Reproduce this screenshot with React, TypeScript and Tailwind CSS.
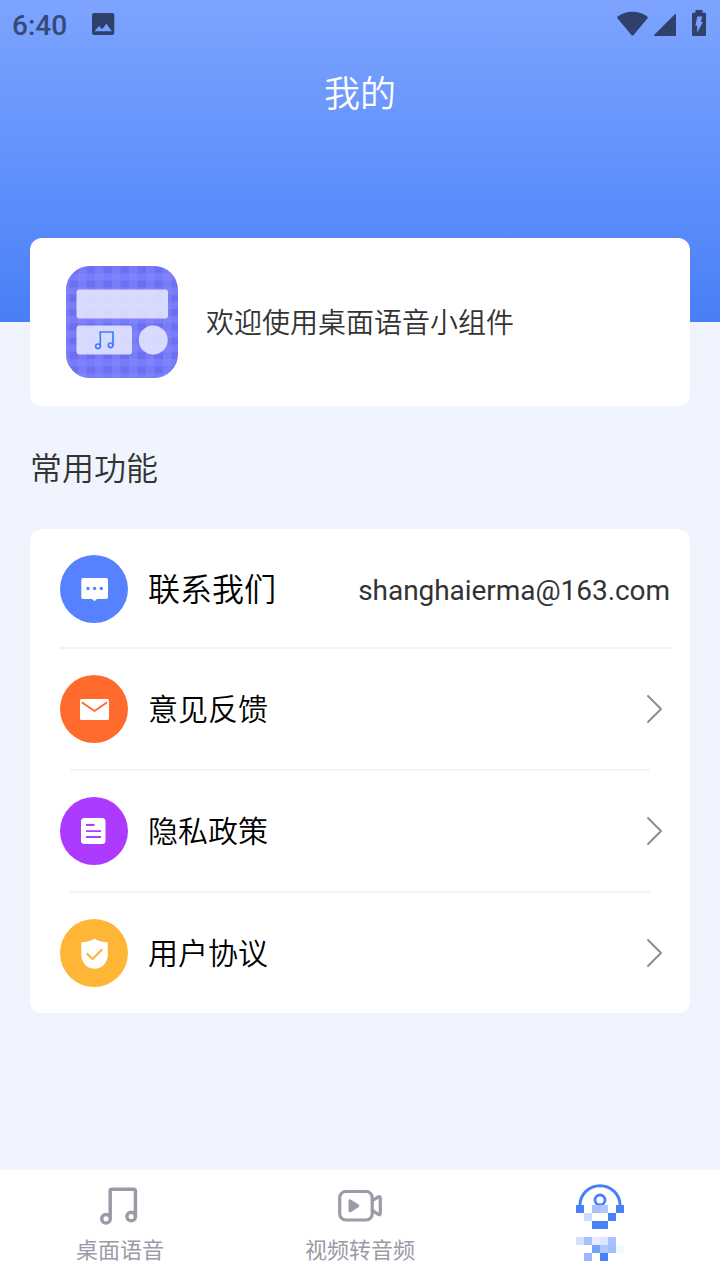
import type { ReactNode } from "react";

type Row = {
  id: number;
  label: string;
  color: string;
  icon: ReactNode;
};

const rows: Row[] = [
  {
    id: 1,
    label: "意见反馈",
    color: "bg-[#ff6b2c]",
    icon: (
      <svg viewBox="0 0 68 68" className="w-full h-full">
        <rect x="20" y="24" width="29" height="21" rx="1.5" fill="#fff" />
        <path d="M22.5 27.7 L34.5 36 L46.5 27.7" fill="none" stroke="#ff6b2c" strokeWidth="1.8" strokeLinecap="round" strokeLinejoin="round" />
      </svg>
    ),
  },
  {
    id: 2,
    label: "隐私政策",
    color: "bg-[#ad3bff]",
    icon: (
      <svg viewBox="0 0 68 68" className="w-full h-full">
        <rect x="21" y="21" width="24.5" height="26" rx="3.5" fill="#fff" />
        <path d="M26 28h8.5M26 34.2h15M26 40h15" stroke="#ad3bff" strokeWidth="1.8" />
      </svg>
    ),
  },
  {
    id: 3,
    label: "用户协议",
    color: "bg-[#ffb636]",
    icon: (
      <svg viewBox="0 0 68 68" className="w-full h-full">
        <path d="M34.5 19.7 Q40 23 47.8 23.2 V35.5 C47.8 43.5 42 49.8 34.5 49.8 C27 49.8 21.3 43.5 21.3 35.5 V23.2 Q29 23 34.5 19.7Z" fill="#fff" />
        <path d="M27.4 35 L32.6 40 L41.7 30.8" fill="none" stroke="#ffb636" strokeWidth="2.2" strokeLinecap="round" strokeLinejoin="round" />
      </svg>
    ),
  },
];

// [x, y, color] of each 8px block
const blocks: [number, number, string][] = [
  [0, 21, "#4880f8"],
  [16, 21, "#a6c1fc"],
  [24, 21, "#b0c8ff"],
  [40, 21, "#4880f8"],
  [8, 29, "#cbdbff"],
  [32, 29, "#4880f8"],
  [16, 37, "#4880f8"],
  [24, 37, "#4880f8"],
  [0, 53, "#d3e0ff"],
  [8, 53, "#a6c1fb"],
  [16, 53, "#e6edff"],
  [24, 53, "#dbe6ff"],
  [32, 53, "#a8c3fc"],
  [16, 61, "#769ffb"],
  [24, 61, "#b0c8ff"],
  [32, 61, "#a0bdfc"],
  [40, 61, "#f5f8ff"],
  [8, 69, "#9bb8fd"],
  [24, 69, "#4880f8"],
];

const stripes = [0, 1, 2, 3, 4, 5, 6, 7];

function StatusBar() {
  return (
    <div className="flex items-center justify-between h-[50px] pl-3 text-[#2f416b]">
      <div className="flex items-center">
        <span className="font-['Roboto',sans-serif] font-medium text-[28px] leading-[50px] w-[79px] pt-0.5 opacity-90">6:40</span>
        <svg width="24" height="24" viewBox="0 0 24 24" className="-mt-0.5">
          <rect x="1" y="1" width="22.3" height="22" rx="2.2" fill="currentColor" />
          <path d="M3.5 19.2 L8 14 L11 17.2 L15.4 11.7 L20.8 19.2Z" fill="#76a0ff" />
        </svg>
      </div>
      <svg width="104" height="50" viewBox="0 0 104 50" fill="currentColor">
        <path d="M1.7 16.5 C9.5 10.2 23.5 10.2 31.3 16.5 Q32.3 17.5 31.4 18.5 L17.6 35 Q16.5 36 15.4 35 L1.6 18.5 Q.7 17.5 1.7 16.5Z" />
        <path d="M38.3 34.8 L58.6 14.4 Q60 13.2 60 15 V35 Q60 36 59 36 H39 Q37.2 36 38.3 34.8Z" />
        <path d="M79.5 10 H86.5 V12.7 H88.8 Q90 12.7 90 14 V34.7 Q90 36 88.7 36 H77.3 Q76 36 76 34.7 V14 Q76 12.7 77.3 12.7 H79.5Z" />
        <path d="M81.3 16.5 H86.2 L84.8 22 H87 L81.2 32.8 V25.7 H79.3Z" fill="#789fff" />
      </svg>
    </div>
  );
}

function AppLogo() {
  return (
    <svg viewBox="0 0 112 112" className="w-28 h-28">
      <defs>
        <clipPath id="logo">
          <rect width="112" height="112" rx="24" />
        </clipPath>
      </defs>
      <g clipPath="url(#logo)">
        <rect width="112" height="112" fill="#6d6ff3" />
        {stripes.map((n) => (
          <g key={n} fill="#848bff" fillOpacity="0.45">
            <rect x={n * 17 - 5} width="8.5" height="112" />
            <rect y={n * 14.3 + 7.2} width="112" height="7.2" />
          </g>
        ))}
      </g>
      <g fill="#edefff" fillOpacity="0.82">
        <rect x="10.5" y="23.5" width="91.5" height="29" rx="3" />
        <rect x="10.5" y="59.5" width="55.5" height="29" rx="3" />
        <circle cx="87.2" cy="74" r="14.5" />
      </g>
      <g fill="none" stroke="#3f7dfb" strokeWidth="1.7">
        <path d="M34.3 80.5 V66 H47 V79.5" />
        <circle cx="32" cy="80.3" r="2.3" />
        <circle cx="44.6" cy="79.3" r="2.3" />
      </g>
    </svg>
  );
}

function App() {
  return (
    <div className="flex flex-col w-full h-[1280px] bg-[#eff4fe] font-['Roboto','Noto_Sans_CJK_SC',sans-serif] overflow-hidden">
      <header className="h-[322px] shrink-0 bg-linear-to-b from-[#7da4ff] to-[#487ff7]">
        <StatusBar />
        <h1 className="text-center text-white text-[36px] leading-[90px] font-[350]">我的</h1>
      </header>

      <main className="flex-1 px-[30px] -mt-[84px]">
        <div className="flex items-center gap-7 h-[168px] pl-9 bg-white rounded-xl">
          <AppLogo />
          <p className="text-[28px] text-[#333] font-[350] pt-1">欢迎使用桌面语音小组件</p>
        </div>

        <h2 className="h-[123px] leading-[127px] text-[32px] text-[#333] font-[350]">常用功能</h2>

        <div className="bg-white rounded-xl">
          <div className="flex items-center h-[120px] ml-[30px] mr-5 border-b-2 border-[#f3f3f4] pt-0.5">
            <div className="w-[68px] h-[68px] rounded-full bg-[#5682ff]">
              <svg viewBox="0 0 68 68" className="w-full h-full">
                <path d="M23 23 H46 Q48 23 48 25 V42 Q48 44 46 44 H37 L34.5 46.3 L32 44 H23 Q21.3 44 21.3 42 V25 Q21.3 23 23 23Z" fill="#fff" />
                <g fill="#5682ff">
                  <circle cx="28" cy="33.5" r="1.7" />
                  <circle cx="34.6" cy="33.5" r="1.7" />
                  <circle cx="41.3" cy="33.5" r="1.7" />
                </g>
              </svg>
            </div>
            <span className="ml-5 text-[32px] text-black font-[350] pt-0.5">联系我们</span>
            <span className="ml-auto text-[28px] text-[#333] pt-1 tracking-[-0.05px]">shanghaierma@163.com</span>
          </div>

          {rows.map((row, i) => (
            <div key={row.id}>
              <div className="flex items-center h-[120px] pl-[30px] pr-[27px]">
                <div className={`w-[68px] h-[68px] rounded-full ${row.color}`}>{row.icon}</div>
                <span className="ml-5 text-[30px] text-black font-[350] pt-px">{row.label}</span>
                <svg width="18" height="30" viewBox="0 0 18 30" className="ml-auto">
                  <path d="M3 2 L16 15 L3 28" fill="none" stroke="#8c8b96" strokeWidth="1.9" strokeLinecap="round" strokeLinejoin="round" />
                </svg>
              </div>
              {i < rows.length - 1 && <div className="h-0.5 mx-10 bg-[#f3f3f4]" />}
            </div>
          ))}
        </div>
      </main>

      <nav className="grid grid-cols-3 h-[110px] shrink-0 bg-white text-[#9b9aa6] text-[22px] leading-[32px]">
        <div className="flex flex-col items-center pt-3">
          <svg width="48" height="48" viewBox="0 0 48 48" fill="none" stroke="currentColor" strokeWidth="3.5">
            <path d="M14.2 36 V9 Q14.2 7.3 16 7.3 H37.5 Q39.4 7.3 39.4 9 V34.5" />
            <circle cx="10" cy="36.7" r="4.3" />
            <circle cx="35.2" cy="34.5" r="4.3" />
          </svg>
          <span className="mt-[5px]">桌面语音</span>
        </div>
        <div className="flex flex-col items-center pt-3">
          <svg width="48" height="48" viewBox="0 0 48 48" fill="none" stroke="currentColor" strokeWidth="3.2">
            <rect x="3.7" y="9.5" width="32.5" height="28.5" rx="6" />
            <path d="M36.5 18.5 L42.3 15 Q44.3 14 44.3 16.3 V31 Q44.3 33.5 42.3 32.3 L36.5 28.5" />
            <path d="M13 18.5 Q13 17 14.6 18 L22.4 22.8 Q23.7 23.7 22.4 24.7 L14.6 29.8 Q13 30.5 13 29Z" fill="currentColor" strokeWidth="1" />
          </svg>
          <span className="mt-[5px]">视频转音频</span>
        </div>
        <div className="flex flex-col items-center pt-3.5">
          <svg width="48" height="78" viewBox="0 0 48 78">
            <path d="M4 21 A20 19.3 0 0 1 44 21" fill="none" stroke="#4880f8" strokeWidth="3" />
            <circle cx="24" cy="16" r="5" fill="none" stroke="#4880f8" strokeWidth="2.8" />
            <rect x="16" y="21" width="16" height="8" fill="#fff" />
            {blocks.map(([x, y, fill]) => (
              <rect key={`${x}-${y}`} x={x} y={y} width="8" height="8" fill={fill} shapeRendering="crispEdges" />
            ))}
          </svg>
        </div>
      </nav>
    </div>
  );
}

export default App;
